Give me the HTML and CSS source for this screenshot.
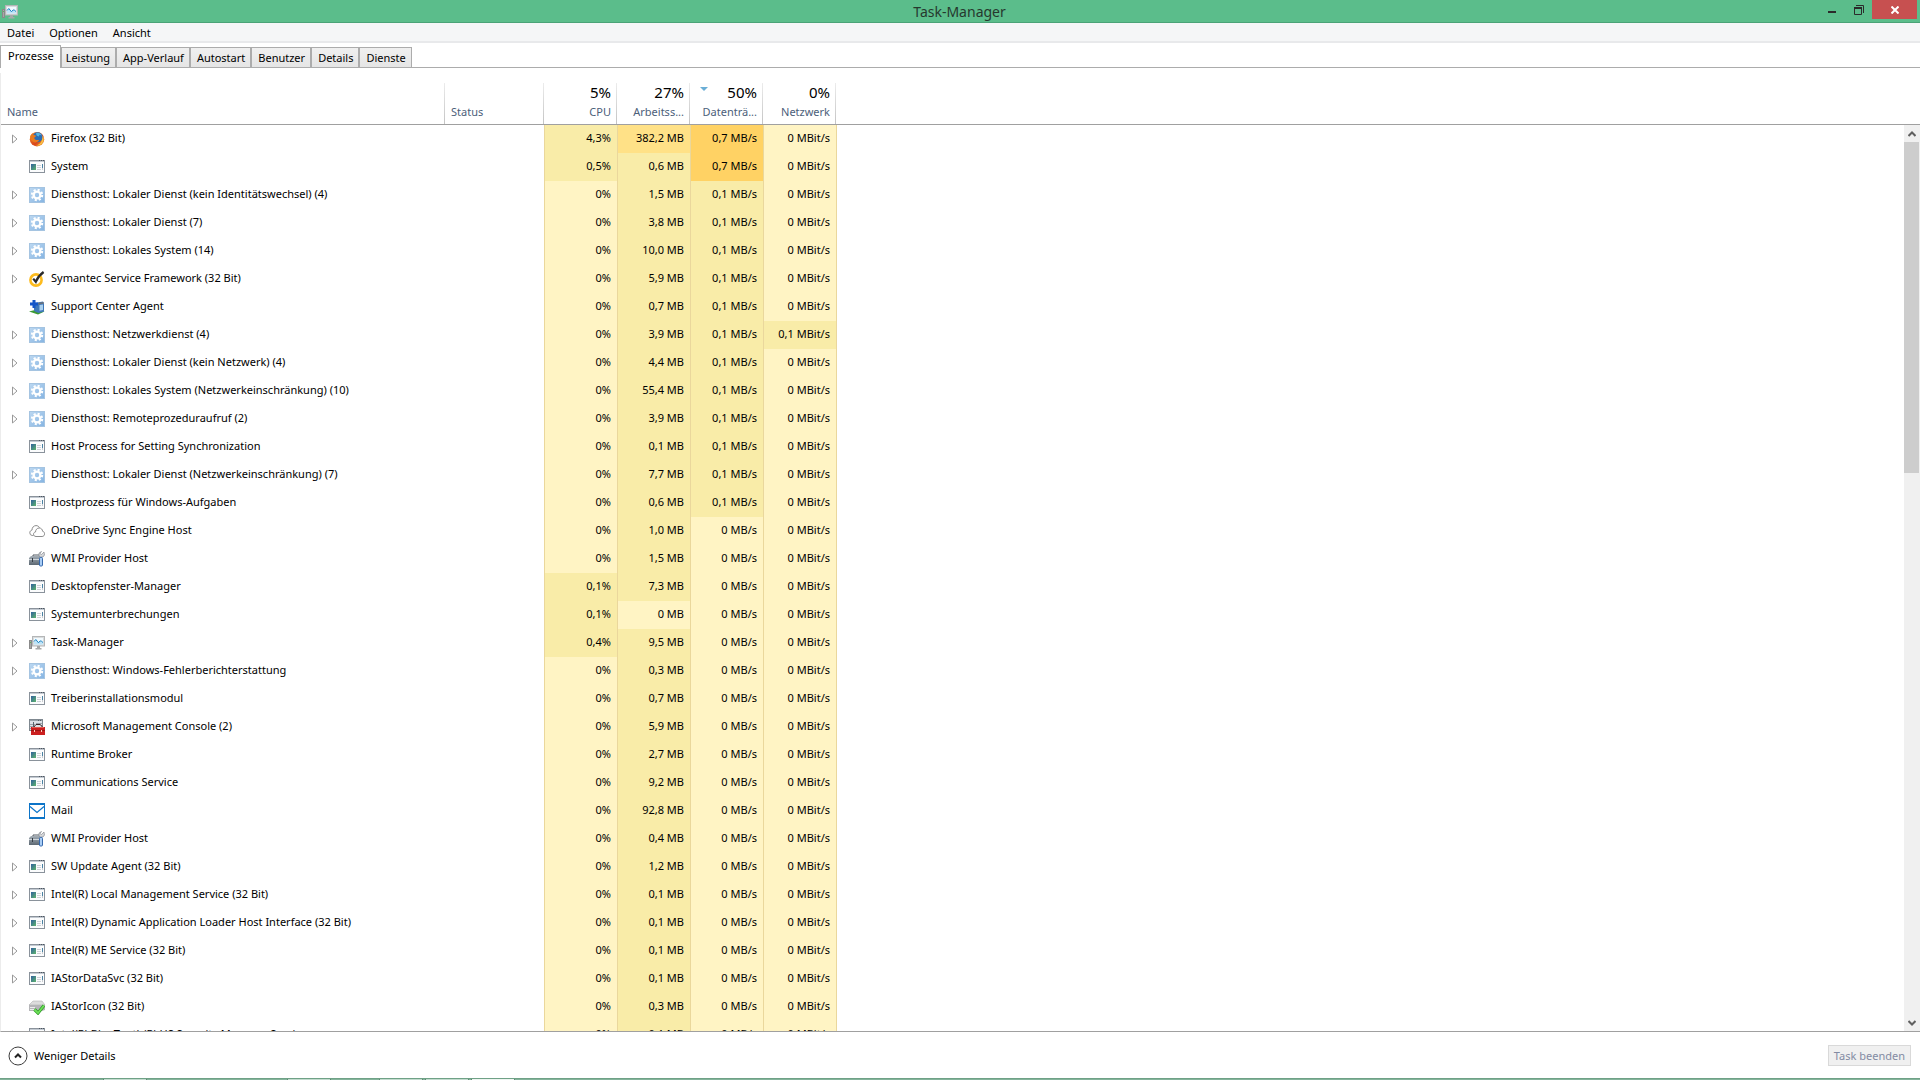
FILE: index.html
```html
<!DOCTYPE html>
<html lang="de">
<head>
    <meta charset="UTF-8">
    <meta name="viewport" content="width=device-width, initial-scale=1.0">
    <title>Task-Manager</title>
    <link rel="stylesheet" href="styles.css">
</head>
<body>
    <!-- Icon set -->
    <svg class="defs" aria-hidden="true">
        <defs>
            <linearGradient id="g-win" x1="0" y1="0" x2="1" y2="1">
                <stop offset="0" stop-color="#2f5f9e"/>
                <stop offset="1" stop-color="#5fb56c"/>
            </linearGradient>
            <linearGradient id="g-gear" x1="0" y1="0" x2="1" y2="1">
                <stop offset="0" stop-color="#bcd8f1"/>
                <stop offset="1" stop-color="#85b4e2"/>
            </linearGradient>
            <linearGradient id="g-fox" x1="0" y1="0" x2="1" y2="1">
                <stop offset="0" stop-color="#f08a24"/>
                <stop offset="0.6" stop-color="#d9451b"/>
                <stop offset="1" stop-color="#f5b13a"/>
            </linearGradient>
            <linearGradient id="g-box" x1="0" y1="0" x2="0" y2="1">
                <stop offset="0" stop-color="#a4adb5"/>
                <stop offset="1" stop-color="#5d6973"/>
            </linearGradient>
        </defs>
        <symbol id="window" viewBox="0 0 16 16">
            <rect x="0.5" y="1.5" width="15" height="12" fill="#fbfcfd" stroke="#8a929b"/>
            <rect x="1" y="2" width="14" height="1" fill="#c3cad2"/>
            <path d="M10 1.500h1M12 1.500h1M14 1.500h1" stroke="#4c5560"/>
            <rect x="2" y="5" width="5" height="6" fill="url(#g-win)"/>
            <path d="M8 6.500h4M8 8.500h4M8 10.500h4" stroke="#cdd1d6"/>
            <path d="M13.500 5v4" stroke="#4b83a4"/>
            <path d="M13.500 9v2" stroke="#c9ccd0"/>
        </symbol>
        <symbol id="gear" viewBox="0 0 16 16">
            <rect x="0.5" y="0.5" width="15" height="15" fill="url(#g-gear)" stroke="#a5c4e1"/>
            <circle cx="8" cy="8" r="5.2" fill="none" stroke="#fff" stroke-width="2" stroke-dasharray="2.1 1.98"/>
            <circle cx="8" cy="8" r="3.4" fill="none" stroke="#fff" stroke-width="2.400"/>
        </symbol>
        <symbol id="firefox" viewBox="0 0 16 16">
            <circle cx="8" cy="8.2" r="7.2" fill="url(#g-fox)"/>
            <circle cx="8.6" cy="6.2" r="5" fill="#2a6db5"/>
            <path d="M7 2c2-.8 5 .2 6 2.6l-2.4-.8-1 1.8-2-1z" fill="#55b4e0"/>
            <path d="M1.2 5C2 3.600 3 2.600 3.600 2c0 1 .3 1.600.8 2 1.200 0 2 .4 2.800 1-.6 1-1.800 1.200-2 2 .2 1.600 2.200 2.600 5 1.800-1 2.600-4.200 3.200-6.200 2C1.800 9.600 1 7.400 1.200 5z" fill="#ea7a1e"/>
            <path d="M13.600 4.500c1.400 2 1.600 5-.2 7.400-1.600 2-4 2.800-6.400 2.500 3.600-.4 6.400-3.400 6.600-9.900z" fill="#f9c445"/>
        </symbol>
        <symbol id="norton" viewBox="0 0 16 16">
            <circle cx="7" cy="9" r="5.600" fill="#fff" stroke="#fdbb1e" stroke-width="2.600"/>
            <path d="M4.200 7.600l2.600 3.200c1.600-3.800 4.400-7.400 7.800-9.800" fill="none" stroke="#2a2a2a" stroke-width="2.200"/>
        </symbol>
        <symbol id="support" viewBox="0 0 16 16">
            <path d="M0 12.500l8-2 7.500 2L9 15.500z" fill="#3c9a35"/>
            <path d="M5 4l9-1.500 1 2v8L9.500 14 5 12z" fill="#3f78ba"/>
            <path d="M9 4l5.500-1 .5 1.500-5.500 1z" fill="#6b7078"/>
            <path d="M10.500 6l3.500-.6V11l-3.500.8z" fill="#a9d0ef"/>
            <path d="M3.500 1h3v2.500H9v3H6.500V9h-3V6.500H1v-3h2.500z" fill="#1556c8"/>
        </symbol>
        <symbol id="cloud" viewBox="0 0 16 16">
            <path d="M4.500 12.500H3.200A2.700 2.700 0 0 1 .8 9.800c0-1.500 1-2.500 2.200-2.700C3 4.500 4.700 2.600 7 2.600c1.700 0 2.900.8 3.500 2.200" fill="none" stroke="#8d8d8d"/>
            <path d="M7 13.500c-1.500 0-2.500-1-2.500-2.300 0-1.200.9-2.100 2-2.200.1-2.300 1.600-4 3.700-4 2 0 3.300 1.500 3.400 3.300 1.200.2 2 1.200 2 2.500 0 1.500-1 2.700-2.500 2.700z" fill="#fff" stroke="#8d8d8d"/>
        </symbol>
        <symbol id="toolbox" viewBox="0 0 16 16">
            <path d="M4 5V4h6" fill="none" stroke="#4e565e"/>
            <path d="M0 7l2-2h11v9H0z" fill="url(#g-box)"/>
            <path d="M0 8.500h12" stroke="#d0d6db"/>
            <path d="M3.500 7v4" stroke="#353d45"/>
            <path d="M15 1l-2.500 2.500L11 2.500 12.500.5 10 2v3l1.500 1H14l1.500-2z" fill="#d5d7da" stroke="#7b8087" stroke-width="0.600"/>
            <rect x="10.500" y="6.500" width="3" height="8.500" rx="1" fill="#a9cdf5" stroke="#3568ad"/>
        </symbol>
        <symbol id="taskmgr" viewBox="0 0 16 16">
            <rect x="0.500" y="5.500" width="2" height="8" fill="#a8a8a8" stroke="#8a8a8a"/>
            <path d="M1 7.500h1" stroke="#5bb85b"/>
            <rect x="3.500" y="1.500" width="12" height="9.500" fill="#d9dcdd" stroke="#b4b6b7"/>
            <rect x="5" y="3" width="9" height="6.500" fill="#f2fafe"/>
            <path d="M5 6.500l1.800-2 2.700 3.300 1.500-1.300 3 .5V9.500H5z" fill="#bfe4f7"/>
            <path d="M5 6.500l1.800-2 2.700 3.300 1.500-1.800h1.200l1.800 1.500" fill="none" stroke="#1c84c4"/>
            <path d="M8 11h3v2h1.500v1.500h-6V13H8z" fill="#a7a9aa"/>
        </symbol>
        <symbol id="mmc" viewBox="0 0 16 16">
            <rect x="0.500" y="0.500" width="13" height="11" fill="#dce1e6" stroke="#7f8890"/>
            <path d="M1 1.500h12M1 5.500h5M1 7.500h3M1 9.500h3M7 4.500h6" stroke="#99a2aa"/>
            <path d="M4.500 3v8M9 1.500h1M11 1.500h1" stroke="#59626b"/>
            <path d="M5.500 9V7.200l1.500-1.700h4L13 7.200V9" fill="none" stroke="#3a2325"/>
            <rect x="2" y="8" width="14" height="8" fill="#cb1f1f"/>
            <path d="M3 8.500h12" stroke="#e65a50"/>
            <path d="M2 11.500h14" stroke="#9c1212"/>
            <path d="M5.500 11v2M12.500 11v2" stroke="#f6c9b9"/>
        </symbol>
        <symbol id="mail" viewBox="0 0 16 16">
            <rect width="16" height="16" fill="#0c74c8"/>
            <rect x="1" y="2" width="14" height="12" fill="#fff"/>
            <path d="M1 3.500l7 6 7-6" fill="none" stroke="#0c74c8" stroke-width="1.200"/>
        </symbol>
        <symbol id="drive" viewBox="0 0 16 16">
            <path d="M0 6l4-4h9l3 4z" fill="#dcdcdc" stroke="#b1b1b1" stroke-width="0.600"/>
            <path d="M0 6h16v5l-3 1H0z" fill="#b5b5b8"/>
            <path d="M1 8.500h5M1 10.500h4" stroke="#ececec"/>
            <path d="M5.500 10.500l3.500 3.500 6-7.500" fill="none" stroke="#2d9b25" stroke-width="3.200"/>
            <path d="M5.500 10.500l3.500 3.500 6-7.500" fill="none" stroke="#6fe05a" stroke-width="1.800"/>
        </symbol>
    </svg>

    <div class="window">
        <header class="titlebar">
            <svg class="icon"><use href="#taskmgr"/></svg>
            <h1>Task-Manager</h1>
            <div class="controls">
                <button class="control" aria-label="Minimieren">
                    <svg width="10" height="10"><path d="M1 7h8" stroke="#2b2b2b" stroke-width="2"/></svg>
                </button>
                <button class="control" aria-label="Verkleinern">
                    <svg width="10" height="10"><path d="M2 .5h7.500V8" fill="none" stroke="#2b2b2b"/><path d="M.5 3v6.500h7V3" fill="none" stroke="#2b2b2b"/><path d="M0 3h8" stroke="#2b2b2b" stroke-width="2"/></svg>
                </button>
                <button class="control close" aria-label="Schließen">
                    <svg width="8" height="8"><path d="M.5.5l7 7M7.500.5l-7 7" stroke="#fff" stroke-width="2"/></svg>
                </button>
            </div>
        </header>

        <nav class="menubar">
            <button>Datei</button>
            <button>Optionen</button>
            <button>Ansicht</button>
        </nav>

        <div class="tabs" role="tablist">
            <button class="tab active" role="tab" aria-selected="true">Prozesse</button>
            <button class="tab" role="tab">Leistung</button>
            <button class="tab" role="tab">App-Verlauf</button>
            <button class="tab" role="tab">Autostart</button>
            <button class="tab" role="tab">Benutzer</button>
            <button class="tab" role="tab">Details</button>
            <button class="tab" role="tab">Dienste</button>
        </div>

        <main class="list">
            <table>
                <colgroup>
                    <col class="col-name">
                    <col class="col-status">
                    <col class="col-value">
                    <col class="col-value">
                    <col class="col-value">
                    <col class="col-value">
                    <col>
                </colgroup>
                <thead>
                    <tr>
                        <th class="left">Name</th>
                        <th class="left">Status</th>
                        <th><strong>5%</strong>CPU</th>
                        <th><strong>27%</strong>Arbeitss...</th>
                        <th class="sorted"><strong>50%</strong>Datenträ...</th>
                        <th><strong>0%</strong>Netzwerk</th>
                        <td></td>
                    </tr>
                </thead>
                <tbody id="processes"></tbody>
            </table>
            <div class="scrollbar">
                <button aria-label="Nach oben"><svg width="8" height="6"><path d="M.5 5L4 1.500 7.500 5" fill="none" stroke="#606060" stroke-width="2"/></svg></button>
                <div class="track"><div class="thumb"></div></div>
                <button aria-label="Nach unten"><svg width="8" height="6"><path d="M.5 1L4 4.500 7.500 1" fill="none" stroke="#606060" stroke-width="2"/></svg></button>
            </div>
        </main>

        <footer class="footer">
            <button class="details">
                <svg width="20" height="20"><circle cx="10" cy="10" r="9" fill="#fff" stroke="#3c3c3c"/><path d="M7 11.500l3-3 3 3" fill="none" stroke="#222" stroke-width="2"/></svg>
                Weniger Details
            </button>
            <button class="end-task" disabled>Task beenden</button>
        </footer>

        <div class="taskbar">
            <span class="item first"></span>
            <span class="item second"></span>
            <span class="item third"></span>
            <span class="item"></span>
            <span class="item current"></span>
        </div>
    </div>

    <script>
        // icon, expandable, name, cpu, memory (MB), disk (MB/s), network (MBit/s)
        const processes = [
            ['firefox', 1, 'Firefox (32 Bit)', '4,3', '382,2', '0,7', '0'],
            ['window', 0, 'System', '0,5', '0,6', '0,7', '0'],
            ['gear', 1, 'Diensthost: Lokaler Dienst (kein Identitätswechsel) (4)', '0', '1,5', '0,1', '0'],
            ['gear', 1, 'Diensthost: Lokaler Dienst (7)', '0', '3,8', '0,1', '0'],
            ['gear', 1, 'Diensthost: Lokales System (14)', '0', '10,0', '0,1', '0'],
            ['norton', 1, 'Symantec Service Framework (32 Bit)', '0', '5,9', '0,1', '0'],
            ['support', 0, 'Support Center Agent', '0', '0,7', '0,1', '0'],
            ['gear', 1, 'Diensthost: Netzwerkdienst (4)', '0', '3,9', '0,1', '0,1'],
            ['gear', 1, 'Diensthost: Lokaler Dienst (kein Netzwerk) (4)', '0', '4,4', '0,1', '0'],
            ['gear', 1, 'Diensthost: Lokales System (Netzwerkeinschränkung) (10)', '0', '55,4', '0,1', '0'],
            ['gear', 1, 'Diensthost: Remoteprozeduraufruf (2)', '0', '3,9', '0,1', '0'],
            ['window', 0, 'Host Process for Setting Synchronization', '0', '0,1', '0,1', '0'],
            ['gear', 1, 'Diensthost: Lokaler Dienst (Netzwerkeinschränkung) (7)', '0', '7,7', '0,1', '0'],
            ['window', 0, 'Hostprozess für Windows-Aufgaben', '0', '0,6', '0,1', '0'],
            ['cloud', 0, 'OneDrive Sync Engine Host', '0', '1,0', '0', '0'],
            ['toolbox', 0, 'WMI Provider Host', '0', '1,5', '0', '0'],
            ['window', 0, 'Desktopfenster-Manager', '0,1', '7,3', '0', '0'],
            ['window', 0, 'Systemunterbrechungen', '0,1', '0', '0', '0'],
            ['taskmgr', 1, 'Task-Manager', '0,4', '9,5', '0', '0'],
            ['gear', 1, 'Diensthost: Windows-Fehlerberichterstattung', '0', '0,3', '0', '0'],
            ['window', 0, 'Treiberinstallationsmodul', '0', '0,7', '0', '0'],
            ['mmc', 1, 'Microsoft Management Console (2)', '0', '5,9', '0', '0'],
            ['window', 0, 'Runtime Broker', '0', '2,7', '0', '0'],
            ['window', 0, 'Communications Service', '0', '9,2', '0', '0'],
            ['mail', 0, 'Mail', '0', '92,8', '0', '0'],
            ['toolbox', 0, 'WMI Provider Host', '0', '0,4', '0', '0'],
            ['window', 1, 'SW Update Agent (32 Bit)', '0', '1,2', '0', '0'],
            ['window', 1, 'Intel(R) Local Management Service (32 Bit)', '0', '0,1', '0', '0'],
            ['window', 1, 'Intel(R) Dynamic Application Loader Host Interface (32 Bit)', '0', '0,1', '0', '0'],
            ['window', 1, 'Intel(R) ME Service (32 Bit)', '0', '0,1', '0', '0'],
            ['window', 1, 'IAStorDataSvc (32 Bit)', '0', '0,1', '0', '0'],
            ['drive', 0, 'IAStorIcon (32 Bit)', '0', '0,3', '0', '0'],
            ['window', 1, 'Intel(R) BlueTooth(R) HS Security Manager Service', '0', '0,1', '0', '0']
        ];
        const units = ['%', ' MB', ' MB/s', ' MBit/s'];

        // Heat level of a cell, from its value and column
        function heat(value, column) {
            const n = parseFloat(value.replace(',', '.'));
            if (n === 0) return 'heat-0';
            if (column === 1 && n > 200) return 'heat-2';
            if (column === 2 && n > 0.5) return 'heat-3';
            return 'heat-1';
        }

        const arrow = '<svg width="6" height="10"><path d="M.5 1v8L5 5z" fill="none" stroke="#9a9a9a"/></svg>';

        document.getElementById('processes').innerHTML = processes.map(([icon, expandable, name, ...values]) => `
            <tr>
                <td>
                    <div class="process">
                        <span class="expander">${expandable ? arrow : ''}</span>
                        <svg class="icon"><use href="#${icon}"/></svg>
                        <span class="name">${name}</span>
                    </div>
                </td>
                <td></td>
                ${values.map((v, i) => `<td class="value ${heat(v, i)}">${v}${units[i]}</td>`).join('')}
                <td class="rest"></td>
            </tr>`).join('');
    </script>
</body>
</html>
```
FILE: styles.css
```css
* {
    box-sizing: border-box;
}

body {
    margin: 0;
    font-family: "Noto Sans", "Open Sans", sans-serif;
    font-size: 11px;
    line-height: 16px;
    color: #000;
    background: #fff;
}

button {
    font: inherit;
    color: inherit;
    background: none;
    border: 0;
    padding: 0;
}

svg {
    display: block;
}

.defs {
    position: absolute;
    width: 0;
    height: 0;
}

.icon {
    width: 16px;
    height: 16px;
    flex: none;
}

.window {
    display: flex;
    flex-direction: column;
    height: 100vh;
}

/* Title bar */
.titlebar {
    display: grid;
    grid-template-columns: 1fr auto 1fr;
    height: 23px;
    padding: 0 3px 0 2px;
    background: #5bbd8b;
    border-bottom: 1px solid #4aa377;
}

.titlebar .icon {
    align-self: center;
}

.titlebar h1 {
    margin: 0;
    font-size: 14px;
    font-weight: 400;
    line-height: 23px;
    color: #26382e;
}

.controls {
    display: flex;
    justify-content: flex-end;
}

.control {
    display: flex;
    align-items: center;
    justify-content: center;
    width: 27px;
    height: 19px;
}

.control.close {
    width: 45px;
    background: #c75050;
}

/* Menu */
.menubar {
    display: flex;
    gap: 1px;
    height: 20px;
    background: #f5f6f7;
    border-bottom: 2px solid #e8e9eb;
}

.menubar button {
    padding: 1px 7px 0;
}

/* Tabs */
.tabs {
    display: flex;
    align-items: flex-end;
    height: 25px;
    border-bottom: 1px solid #acacac;
}

.tab {
    height: 20px;
    padding: 0 5px;
    border: 1px solid #acacac;
    border-bottom: 0;
    background: linear-gradient(#f0f0f0, #e5e5e5);
}

.tab + .tab {
    padding: 0 5px 0 4px;
}

.tab + .tab + .tab {
    padding: 0 5px 0 6px;
}

.tab.active {
    height: 23px;
    padding: 0 6px 3px 7px;
    margin-bottom: -1px;
    background: #fff;
}

/* Process list */
.list {
    position: relative;
    flex: 1;
    min-height: 0;
    margin-top: 5px;
    overflow: hidden;
    border-left: 1px solid #ececec;
    border-bottom: 1px solid #a0a0a0;
}

table {
    width: 100%;
    table-layout: fixed;
    border-spacing: 0;
}

.col-name {
    width: 444px;
}

.col-status {
    width: 99px;
}

.col-value {
    width: 73px;
}

th,
td {
    padding: 0;
}

thead th,
thead td {
    height: 52px;
    border-bottom: 1px solid #a0a0a0;
}

thead th {
    padding: 0 6px 4px;
    font-weight: 400;
    text-align: right;
    vertical-align: bottom;
    color: #4c607a;
    background: linear-gradient(#ececec, #c4c4c4) right bottom / 1px 41px no-repeat;
}

thead th.left {
    text-align: left;
}

thead strong {
    display: block;
    font-size: 15px;
    font-weight: 400;
    line-height: 24px;
    color: #000;
}

th.sorted {
    position: relative;
}

.sorted::before {
    content: "";
    position: absolute;
    top: 14px;
    left: 10px;
    border: 4px solid transparent;
    border-top-color: #6aaed6;
    border-bottom: 0;
}

tbody td {
    height: 28px;
}

.process {
    display: flex;
    align-items: center;
    white-space: nowrap;
}

.process .icon {
    margin-right: 6px;
}

.expander {
    width: 28px;
    padding-left: 11px;
}

.name,
.value {
    padding-bottom: 2px;
}

.value {
    padding-right: 6px;
    text-align: right;
    border-left: 1px solid #ead79c;
}

.rest {
    border-left: 1px solid #ead79c;
}

.heat-0 {
    background: #fff4c4;
}

.heat-1 {
    background: #f9eca8;
}

.heat-2 {
    background: #ffe187;
}

.heat-3 {
    background: #ffd264;
}

.scrollbar {
    position: absolute;
    top: 52px;
    right: 0;
    bottom: 0;
    display: flex;
    flex-direction: column;
    width: 16px;
    background: #f0f0f0;
}

.scrollbar button {
    display: flex;
    align-items: center;
    justify-content: center;
    height: 17px;
}

.track {
    flex: 1;
}

.thumb {
    width: 15px;
    height: 38%;
    background: #cdcdcd;
}

/* Footer */
.footer {
    display: flex;
    align-items: center;
    justify-content: space-between;
    height: 46px;
    padding: 1px 9px 0 8px;
}

.details {
    display: flex;
    align-items: center;
    gap: 6px;
}

.end-task {
    height: 21px;
    padding: 0 5px;
    color: #838ba3;
    background: #f0f0f0;
    border: 1px solid #d9d9d9;
}

/* Edge of the desktop taskbar */
.taskbar {
    display: flex;
    height: 2px;
    background: #84b49b;
    border-top: 1px solid #6fa186;
}

.item {
    width: 44px;
    margin-right: 2px;
    background: #c3dccf;
    border: solid #5f8a74;
    border-width: 0 1px;
}

.item.first {
    margin-left: 103px;
}

.item.second {
    margin-left: 138px;
}

.item.third {
    margin-left: 46px;
}

.item.current {
    background: #eef5f1;
}
```
